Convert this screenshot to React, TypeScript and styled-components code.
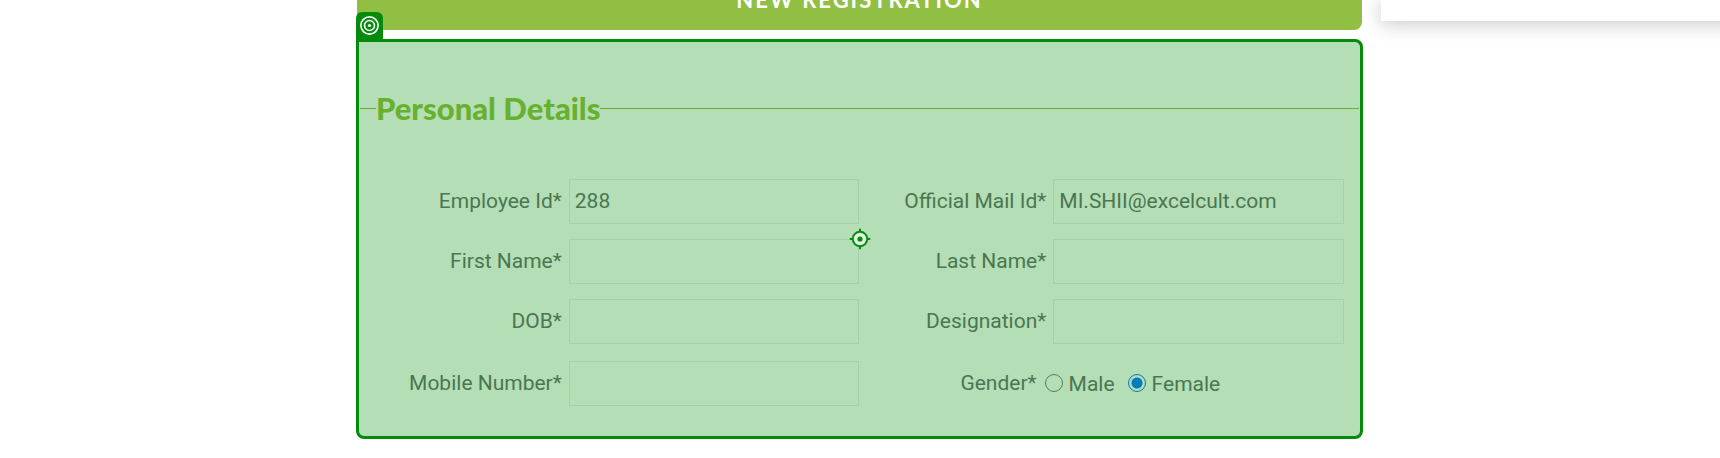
import React from "react";
import styled, { createGlobalStyle } from "styled-components";

const GlobalStyle = createGlobalStyle`
  * { box-sizing: border-box; }
  body { margin: 0; background: #fff; overflow: hidden; }
`;

const Page = styled.div`
  display: grid;
  grid-template-columns: 356fr 1007fr 357fr;
  align-items: start;
  font-family: Roboto, "Liberation Sans", sans-serif;
  font-size: 21px;
  line-height: 24px;
  color: #4a7650;
`;

const Main = styled.main`
  grid-column: 2;
  min-width: 0;
`;

const Banner = styled.h1`
  margin: -30px 1px 9px;
  height: 60px;
  border-radius: 8px;
  background: #90bf44;
  color: #fff;
  font: 700 22px/60px Lato, sans-serif;
  letter-spacing: 2px;
  text-align: center;
`;

const Panel = styled.form`
  position: relative;
  padding: 48px 0 30px;
  border: 3px solid #048b0b;
  border-radius: 0 8px 8px 8px;
  background: #b4deb6;
`;

const Badge = styled.span`
  position: absolute;
  left: -3px;
  bottom: 100%;
  width: 27px;
  height: 30px;
  padding: 4px;
  border-radius: 6px 6px 0 0;
  background: #048b0b;
`;

const Crosshair = styled.svg`
  position: absolute;
  left: 50%;
  top: 50%;
  transform: translate(-50%, -50%);
`;

const Heading = styled.h2`
  display: flex;
  align-items: center;
  margin: 0 1px 53px;
  color: #67b12f;
  font: 900 31px/36px Lato, sans-serif;
  white-space: nowrap;

  &::before,
  &::after {
    content: "";
    width: 16px;
    height: 1px;
    background: #67b12f;
  }
  &::after {
    flex: 1;
  }
`;

const Rows = styled.div`
  display: flex;
  flex-direction: column;
  gap: 15px;
  padding: 0 16px;
`;

const Row = styled.div<{ $last?: boolean }>`
  display: grid;
  grid-template-columns: 1fr 1fr;
  padding-top: ${(p) => (p.$last ? 2 : 0)}px;
`;

const Field = styled.div<{ $choice?: boolean }>`
  display: grid;
  grid-template-columns: ${(p) => (p.$choice ? "38% 62%" : "40% 60%")};
  align-items: center;
`;

const Label = styled.label`
  padding-right: 7px;
  padding-bottom: 2px;
  text-align: right;
  white-space: nowrap;
`;

const TextInput = styled.input`
  width: 100%;
  min-width: 0;
  height: 45px;
  padding: 0 5px 2px;
  border: 1px solid #a6cfae;
  border-radius: 0;
  outline: 0;
  background: transparent;
  color: inherit;
  font: inherit;
`;

const Choices = styled.div`
  display: flex;
  gap: 12px;
`;

const Choice = styled.label`
  display: flex;
  align-items: center;
  gap: 6px;
`;

const Radio = styled.input`
  appearance: none;
  width: 18px;
  height: 18px;
  margin: 0 0 1px 1px;
  border: 1px solid #55805b;
  border-radius: 50%;

  &:checked {
    border-color: #047cbb;
    background: radial-gradient(circle, #047cbb 5px, transparent 6px);
  }
`;

const SideCard = styled.aside`
  grid-column: 3;
  height: 21px;
  margin-left: 18px;
  margin-right: -40px;
  background: #fff;
  box-shadow: 0 2px 20px rgba(0, 0, 0, 0.24);
`;

type TextFieldProps = { id: string; label: string; value?: string };

const TextField = ({ id, label, value }: TextFieldProps) => (
  <Field>
    <Label htmlFor={id}>{label}*</Label>
    <TextInput id={id} name={id} type="text" defaultValue={value} />
  </Field>
);

const rows: TextFieldProps[][] = [
  [
    { id: "employeeId", label: "Employee Id", value: "288" },
    { id: "mail", label: "Official Mail Id", value: "MI.SHII@excelcult.com" },
  ],
  [
    { id: "firstName", label: "First Name" },
    { id: "lastName", label: "Last Name" },
  ],
  [
    { id: "dob", label: "DOB" },
    { id: "designation", label: "Designation" },
  ],
];

export default function App() {
  return (
    <Page>
      <GlobalStyle />
      <Main>
        <Banner>NEW REGISTRATION</Banner>
        <Panel>
          <Badge>
            <svg width="19" height="19" viewBox="0 0 19 19" fill="none" stroke="#fff" strokeWidth="1.6" display="block">
              <circle cx="9.5" cy="9.5" r="8.6" />
              <circle cx="9.5" cy="9.5" r="5" />
              <circle cx="9.5" cy="9.5" r="1.6" fill="#fff" stroke="none" />
            </svg>
          </Badge>
          <Heading>Personal Details</Heading>
          <Rows>
            {rows.map((row) => (
              <Row key={row[0].id}>
                {row.map((field) => (
                  <TextField key={field.id} {...field} />
                ))}
              </Row>
            ))}
            <Row $last>
              <TextField id="mobile" label="Mobile Number" />
              <Field $choice role="radiogroup" aria-labelledby="genderLabel">
                <Label as="span" id="genderLabel">Gender*</Label>
                <Choices>
                  <Choice>
                    <Radio type="radio" name="gender" value="male" />
                    Male
                  </Choice>
                  <Choice>
                    <Radio type="radio" name="gender" value="female" defaultChecked />
                    Female
                  </Choice>
                </Choices>
              </Field>
            </Row>
          </Rows>
          <Crosshair width="21" height="21" viewBox="0 0 21 21" fill="none" stroke="#048b0b" strokeWidth="2">
            <circle cx="10.5" cy="10.5" r="7.2" fill="#e2f1e3" />
            <circle cx="10.5" cy="10.5" r="2.6" fill="#048b0b" stroke="none" />
            <path d="M10.5 0v3M10.5 18v3M0 10.5h3M18 10.5h3" />
          </Crosshair>
        </Panel>
      </Main>
      <SideCard />
    </Page>
  );
}
